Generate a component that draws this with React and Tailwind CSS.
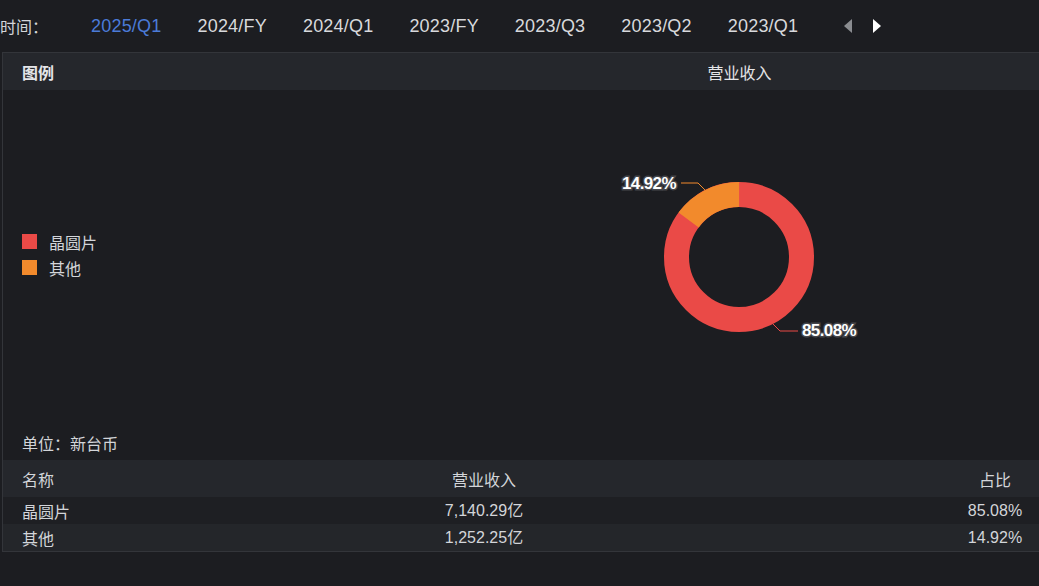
import React, { useState } from 'react';

const periods = ['2025/Q1', '2024/FY', '2024/Q1', '2023/FY', '2023/Q3', '2023/Q2', '2023/Q1'];

const rows = [
    { name: '晶圆片', value: '7,140.29亿', ratio: '85.08%', color: '#ea4a47' },
    { name: '其他', value: '1,252.25亿', ratio: '14.92%', color: '#f28a2c' },
];

const font = { fontFamily: '"Noto Sans CJK SC", "Liberation Sans", sans-serif' };

const labelStyle = { fontFamily: '"Liberation Sans", sans-serif', letterSpacing: '-0.6px' };

const Donut = () => {
    const cx = 299;
    const cy = 167;
    const r = 62.5;
    const c = 2 * Math.PI * r;
    const orange = 0.1492 * c;
    return (
        <svg width="599" height="335" viewBox="0 0 599 335">
            {/* red base ring */}
            <circle cx={cx} cy={cy} r={r} fill="none" stroke="#ea4a47" strokeWidth="25" />
            {/* orange slice, counterclockwise from 12 o'clock */}
            <circle
                cx={cx}
                cy={cy}
                r={r}
                fill="none"
                stroke="#f28a2c"
                strokeWidth="25"
                strokeDasharray={`${orange} ${c}`}
                transform={`rotate(${-90 - 53.71} ${cx} ${cy})`}
            />
            {/* label lines */}
            <polyline points="265,100 258,93 241,93" fill="none" stroke="#f28a2c" strokeWidth="1" />
            <polyline points="333,234 340,241 358,241" fill="none" stroke="#ea4a47" strokeWidth="1" />
            <text
                x="236"
                y="99"
                textAnchor="end"
                fontSize="17"
                fontWeight="700"
                fill="#ffffff"
                stroke="#45464b"
                strokeWidth="3"
                paintOrder="stroke"
                style={labelStyle}
            >
                14.92%
            </text>
            <text
                x="362"
                y="246"
                fontSize="17"
                fontWeight="700"
                fill="#ffffff"
                stroke="#45464b"
                strokeWidth="3"
                paintOrder="stroke"
                style={labelStyle}
            >
                85.08%
            </text>
        </svg>
    );
};

const App = () => {
    const [active, setActive] = useState(0);

    return (
        <div className="w-[1039px] h-[586px] bg-[#1c1d21] text-[#d3d5d9] overflow-hidden" style={font}>
            {/* Period tabs */}
            <div className="h-[52px] flex items-center">
                <span className="text-[16px] w-[91px]">时间：</span>
                <div className="flex items-center gap-[36px]">
                    {periods.map((p, i) => (
                        <button
                            key={p}
                            onClick={() => setActive(i)}
                            className={`text-[18px] tracking-[0.2px] ${i === active ? 'text-[#4b7bd8]' : 'text-[#d8d9dc]'}`}
                            style={{ fontFamily: '"Liberation Sans", sans-serif' }}
                        >
                            {p}
                        </button>
                    ))}
                </div>
                <div className="flex items-center gap-[21px] ml-[46px]">
                    <svg width="8" height="14" viewBox="0 0 8 14">
                        <polygon points="8,0 8,14 0,7" fill="#8a8c90" />
                    </svg>
                    <svg width="8" height="14" viewBox="0 0 8 14">
                        <polygon points="0,0 0,14 8,7" fill="#ffffff" />
                    </svg>
                </div>
            </div>

            {/* Panel */}
            <div className="ml-[2px] border-t border-l border-b border-[#33353a]">
                <div className="h-[37px] flex items-center bg-[#25272c] text-[16px] text-[#e4e5e8]">
                    <div className="w-[437px] pl-[19px] font-bold">图例</div>
                    <div className="flex-1 text-center">营业收入</div>
                </div>

                <div className="h-[335px] flex">
                    <div className="w-[437px] flex flex-col justify-center gap-[2px] pl-[19px] pb-[6px]">
                        {rows.map((r) => (
                            <div key={r.name} className="flex items-center gap-[12px] text-[16px] leading-[24px]">
                                <span className="w-[15px] h-[15px]" style={{ backgroundColor: r.color }} />
                                <span>{r.name}</span>
                            </div>
                        ))}
                    </div>
                    <div className="flex-1">
                        <Donut />
                    </div>
                </div>

                <div className="h-[35px] flex items-center pl-[19px] text-[16px]">单位：新台币</div>

                <div className="grid grid-cols-[300px_362px_1fr] h-[37px] items-center bg-[#25272c] text-[16px]">
                    <div className="pl-[19px]">名称</div>
                    <div className="text-center">营业收入</div>
                    <div className="flex justify-end pr-[8px]">
                        <span className="w-[72px] text-center">占比</span>
                    </div>
                </div>
                {rows.map((r, i) => (
                    <div
                        key={r.name}
                        className={`grid grid-cols-[300px_362px_1fr] h-[27px] items-center text-[16px] ${i % 2 === 0 ? 'bg-[#1e1f23]' : 'bg-[#24262a]'}`}
                    >
                        <div className="pl-[19px]">{r.name}</div>
                        <div className="text-center" style={{ fontFamily: '"Liberation Sans", "Noto Sans CJK SC", sans-serif' }}>{r.value}</div>
                        <div className="flex justify-end pr-[8px]">
                            <span className="w-[72px] text-center" style={{ fontFamily: '"Liberation Sans", sans-serif' }}>{r.ratio}</span>
                        </div>
                    </div>
                ))}
            </div>
        </div>
    );
};

export default App;
